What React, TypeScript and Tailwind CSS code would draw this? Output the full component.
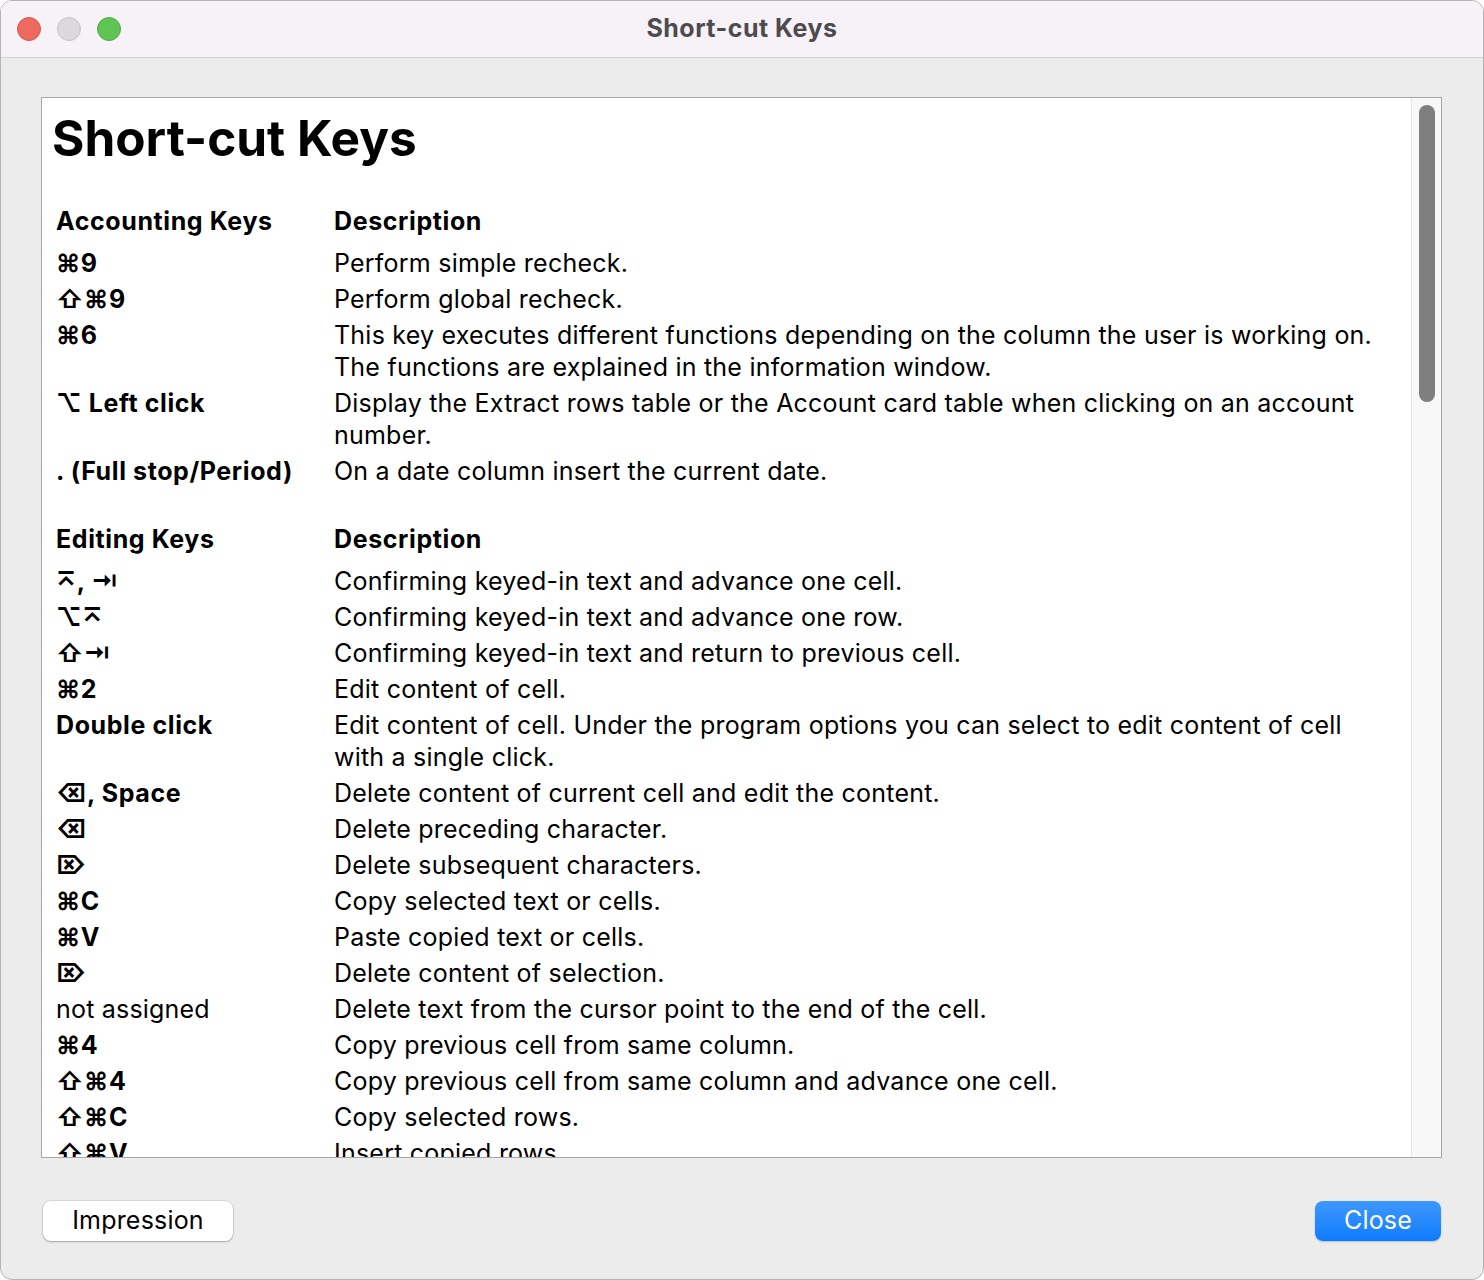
import React from "react";

type Row = { k: React.ReactNode; d: string[]; bold?: boolean };

const font = { fontFamily: 'Inter, "DejaVu Sans", sans-serif' };

const acct: Row[] = [
  { k: "⌘9", d: ["Perform simple recheck."] },
  { k: "⇧⌘9", d: ["Perform global recheck."] },
  {
    k: "⌘6",
    d: [
      "This key executes different functions depending on the column the user is working on.",
      "The functions are explained in the information window.",
    ],
  },
  {
    k: "⌥ Left click",
    d: [
      "Display the Extract rows table or the Account card table when clicking on an account",
      "number.",
    ],
  },
  { k: ". (Full stop/Period)", d: ["On a date column insert the current date."] },
];

const edit: Row[] = [
  { k: "⌅, ⇥", d: ["Confirming keyed-in text and advance one cell."] },
  { k: "⌥⌅", d: ["Confirming keyed-in text and advance one row."] },
  { k: "⇧⇥", d: ["Confirming keyed-in text and return to previous cell."] },
  { k: "⌘2", d: ["Edit content of cell."] },
  {
    k: "Double click",
    d: [
      "Edit content of cell. Under the program options you can select to edit content of cell",
      "with a single click.",
    ],
  },
  { k: "⌫, Space", d: ["Delete content of current cell and edit the content."] },
  { k: "⌫", d: ["Delete preceding character."] },
  { k: "⌦", d: ["Delete subsequent characters."] },
  { k: "⌘C", d: ["Copy selected text or cells."] },
  { k: "⌘V", d: ["Paste copied text or cells."] },
  { k: "⌦", d: ["Delete content of selection."] },
  { k: "not assigned", d: ["Delete text from the cursor point to the end of the cell."], bold: false },
  { k: "⌘4", d: ["Copy previous cell from same column."] },
  { k: "⇧⌘4", d: ["Copy previous cell from same column and advance one cell."] },
  { k: "⇧⌘C", d: ["Copy selected rows."] },
  { k: "⇧⌘V", d: ["Insert copied rows."] },
];

function Section({ title, rows }: { title: string; rows: Row[] }) {
  return (
    <div className="grid grid-cols-[278px_1fr] text-[25px] text-black">
      <div className="font-bold tracking-[0.6px] leading-[32px] py-[2px]">{title}</div>
      <div className="font-bold tracking-[0.6px] leading-[32px] py-[2px]">Description</div>
      <div className="col-span-2 h-[6px]" />
      {rows.map((r, i) => (
        <React.Fragment key={i}>
          <div
            className={
              (r.bold === false ? "font-normal tracking-[0.2px]" : "font-bold tracking-[0.6px]") +
              " leading-[32px] py-[2px] whitespace-nowrap"
            }
          >
            {r.k}
          </div>
          <div className="leading-[32px] py-[2px] whitespace-nowrap tracking-[0.22px]">
            {r.d.map((l, j) => (
              <div key={j}>{l}</div>
            ))}
          </div>
        </React.Fragment>
      ))}
    </div>
  );
}

export default function App() {
  return (
    <div className="w-[1484px] h-[1280px] bg-white" style={font}>
      <div className="w-full h-full rounded-[12px] border border-[#b4b4b4] overflow-hidden flex flex-col bg-[#ececec]">
        <div className="h-[57px] shrink-0 bg-[#f6f2f7] border-b border-[#d2d0d3] flex items-center relative">
          <div className="flex items-center gap-[16px] pl-[16px]">
            <div className="w-[24px] h-[24px] rounded-full bg-[#ee6a5f] border border-[#d9574d]" />
            <div className="w-[24px] h-[24px] rounded-full bg-[#dcd8dd] border border-[#c6c2c7]" />
            <div className="w-[24px] h-[24px] rounded-full bg-[#5fc454] border border-[#4eaa44]" />
          </div>
          <div className="absolute inset-0 flex items-center justify-center text-[25px] tracking-[0.5px] font-bold text-[#4d4b4e]">
            Short-cut Keys
          </div>
        </div>
        <div className="flex-1 flex flex-col pt-[39px] pl-[40px] pr-[41px]">
          <div className="h-[1061px] border border-[#a6a6a6] bg-white flex">
            <div className="flex-1 overflow-hidden pt-[10px]">
              <div className="pl-[10px] text-[49.5px] font-bold leading-[60px] text-black">Short-cut Keys</div>
              <div className="pl-[14px] mt-[35px]">
                <Section title="Accounting Keys" rows={acct} />
                <div className="h-[32px]" />
                <Section title="Editing Keys" rows={edit} />
              </div>
            </div>
            <div className="w-[30px] shrink-0 bg-[#f8f8f8] border-l border-[#e6e6e6] pt-[7px] flex justify-center">
              <div className="w-[16px] h-[297px] rounded-full bg-[#7f7f7f]" />
            </div>
          </div>
          <div className="flex justify-between items-center mt-[43px] pl-[2px]">
            <button className="w-[190px] h-[40px] bg-white rounded-[8px] text-[25px] tracking-[0.2px] text-black shadow-[0_0_0_1px_rgba(0,0,0,0.08),0_1px_2px_rgba(0,0,0,0.25)]">
              Impression
            </button>
            <button className="w-[126px] h-[40px] mr-[1px] rounded-[8px] text-[25px] tracking-[0.2px] text-white bg-gradient-to-b from-[#3d98fd] to-[#0a7bff] shadow-[0_1px_2px_rgba(0,0,0,0.2)]">
              Close
            </button>
          </div>
        </div>
      </div>
    </div>
  );
}
